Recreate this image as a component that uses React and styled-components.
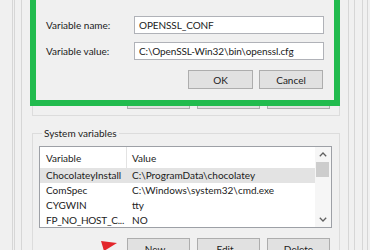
import React from "react";
import styled, { createGlobalStyle } from "styled-components";

const GlobalStyle = createGlobalStyle`
  html, body {
    margin: 0;
    padding: 0;
    background: #f0f0f0;
  }
  body {
    font-family: Lato, "Liberation Sans", sans-serif;
    font-size: 10px;
    color: #1b1b1b;
  }
`;

const Screen = styled.div`
  position: relative;
  display: flex;
  width: 370px;
  height: 250px;
  overflow: hidden;
  background: #f0f0f0;
`;

const Frame = styled.div`
  flex: 1;
  display: flex;
  min-width: 0;
  margin-left: ${(p) => p.$left}px;
  margin-right: ${(p) => p.$right}px;
  border-left: ${(p) => (p.$noLeft ? "none" : "1px solid #d6d6d6")};
  border-right: 1px solid #d6d6d6;
`;

const EnvBody = styled.div`
  position: relative;
  flex: 1;
  min-width: 0;
`;

const UserGroup = styled.div`
  margin: 0 8px 0 10px;
  border: 1px solid #dcdcdc;
  border-top: none;
  padding: 87px 9px 6px 0;
`;

const SystemGroup = styled.fieldset`
  margin: 11px 8px 0 10px;
  padding: 0 7px 0 6px;
  min-width: 0;
  border: 1px solid #dcdcdc;
`;

const Legend = styled.legend`
  margin-left: 3px;
  padding: 0 2px;
  line-height: 12px;
  font-size: 10px;
`;

const ListBox = styled.div`
  display: flex;
  height: 82px;
  box-sizing: border-box;
  margin-top: 7px;
  border: 1px solid #9da0a6;
  background: #fff;
  overflow: hidden;
`;

const Table = styled.div`
  flex: 1;
  min-width: 0;
`;

const HeaderRow = styled.div`
  display: grid;
  grid-template-columns: 86px 1fr;
  height: 21px;
  align-items: stretch;
`;

const HeaderCell = styled.div`
  display: flex;
  align-items: center;
  padding-left: ${(p) => (p.$sep ? 5 : 6)}px;
  border-left: ${(p) => (p.$sep ? "1px solid #e3e3e3" : "none")};
`;

const Row = styled.div`
  display: grid;
  grid-template-columns: 86px 1fr;
  height: 15px;
  line-height: 15px;
  background: ${(p) => (p.$selected ? "#e3e3e3" : "transparent")};
`;

const Cell = styled.div`
  padding-left: 6px;
  white-space: nowrap;
  letter-spacing: ${(p) => (p.$tight ? "-0.25px" : "0")};
`;

const Scrollbar = styled.div`
  display: flex;
  flex-direction: column;
  width: 16px;
  background: #f6f6f6;
`;

const ScrollArrow = styled.div`
  display: flex;
  align-items: center;
  justify-content: center;
  height: 15px;
`;

const Thumb = styled.div`
  height: 15px;
  margin: 0 2px 0 1px;
  background: #cdcdcd;
`;

const Track = styled.div`
  flex: 1;
`;

const ButtonRow = styled.div`
  display: flex;
  justify-content: flex-end;
  gap: ${(p) => p.$gap}px;
  margin-top: ${(p) => p.$mt || 0}px;
  margin-right: ${(p) => p.$mr || 0}px;
`;

const Button = styled.div`
  display: flex;
  align-items: center;
  justify-content: center;
  width: ${(p) => p.$w}px;
  height: ${(p) => p.$h}px;
  box-sizing: border-box;
  border: 1px solid #adadad;
  background: #e1e1e1;
  font-size: 10px;
`;

const Highlight = styled.div`
  position: absolute;
  top: -20px;
  left: 8px;
  width: 310px;
  box-sizing: border-box;
  border: 6px solid #22bb4e;
`;

const EditDialog = styled.div`
  padding: 30px 10px 11px 10px;
  background: #f0f0f0;
`;

const FieldGrid = styled.div`
  display: grid;
  grid-template-columns: 88px 1fr;
  row-gap: 8px;
  align-items: center;
`;

const Label = styled.div`
  font-size: 10px;
`;

const Input = styled.div`
  height: 18px;
  box-sizing: border-box;
  padding-left: 4px;
  border: 1px solid #b0b2b8;
  background: #fff;
  line-height: 16px;
  white-space: nowrap;
  letter-spacing: -0.1px;
`;

const ArrowMark = styled.svg`
  position: absolute;
  left: 98px;
  top: 238px;
`;

const Chevron = ({ up }) => (
  <svg width="8" height="5" viewBox="0 0 8 5">
    <polyline
      points={up ? "0.8,4.2 4,1 7.2,4.2" : "0.8,0.8 4,4 7.2,0.8"}
      fill="none"
      stroke="#606060"
      strokeWidth="1.3"
    />
  </svg>
);

const rows = [
  ["ChocolateyInstall", "C:\\ProgramData\\chocolatey"],
  ["ComSpec", "C:\\Windows\\system32\\cmd.exe"],
  ["CYGWIN", "tty"],
  ["FP_NO_HOST_C...", "NO"],
];

export default function App() {
  return (
    <>
      <GlobalStyle />
      <Screen>
        <Frame $left={12} $right={2}>
          <Frame $left={1} $right={4}>
            <Frame $left={6} $right={7}>
              <Frame $left={0} $right={5} $noLeft>
                <EnvBody>
                  <UserGroup>
                    <ButtonRow $gap={7}>
                      <Button $w={63} $h={22}>New...</Button>
                      <Button $w={63} $h={22}>Edit...</Button>
                      <Button $w={63} $h={22}>Delete</Button>
                    </ButtonRow>
                  </UserGroup>

                  <SystemGroup>
                    <Legend>System variables</Legend>
                    <ListBox>
                      <Table>
                        <HeaderRow>
                          <HeaderCell>Variable</HeaderCell>
                          <HeaderCell $sep>Value</HeaderCell>
                        </HeaderRow>
                        {rows.map(([name, value], i) => (
                          <Row key={name} $selected={i === 0}>
                            <Cell $tight={i === 3}>{name}</Cell>
                            <Cell>{value}</Cell>
                          </Row>
                        ))}
                      </Table>
                      <Scrollbar>
                        <ScrollArrow>
                          <Chevron up />
                        </ScrollArrow>
                        <Thumb />
                        <Track />
                        <ScrollArrow>
                          <Chevron />
                        </ScrollArrow>
                      </Scrollbar>
                    </ListBox>
                    <ButtonRow $gap={7} $mt={10} $mr={2}>
                      <Button $w={63} $h={22}>New...</Button>
                      <Button $w={63} $h={22}>Edit...</Button>
                      <Button $w={63} $h={22}>Delete</Button>
                    </ButtonRow>
                  </SystemGroup>

                  <Highlight>
                    <EditDialog>
                      <FieldGrid>
                        <Label>Variable name:</Label>
                        <Input>OPENSSL_CONF</Input>
                        <Label>Variable value:</Label>
                        <Input>C:\OpenSSL-Win32\bin\openssl.cfg</Input>
                      </FieldGrid>
                      <ButtonRow $gap={6} $mt={10} $mr={1}>
                        <Button $w={65} $h={19}>OK</Button>
                        <Button $w={64} $h={19}>Cancel</Button>
                      </ButtonRow>
                    </EditDialog>
                  </Highlight>
                </EnvBody>
              </Frame>
            </Frame>
          </Frame>
        </Frame>
        <ArrowMark width="24" height="14" viewBox="0 0 24 14">
          <polygon points="19,5 3,3 6,13" fill="#e3262b" />
        </ArrowMark>
      </Screen>
    </>
  );
}
